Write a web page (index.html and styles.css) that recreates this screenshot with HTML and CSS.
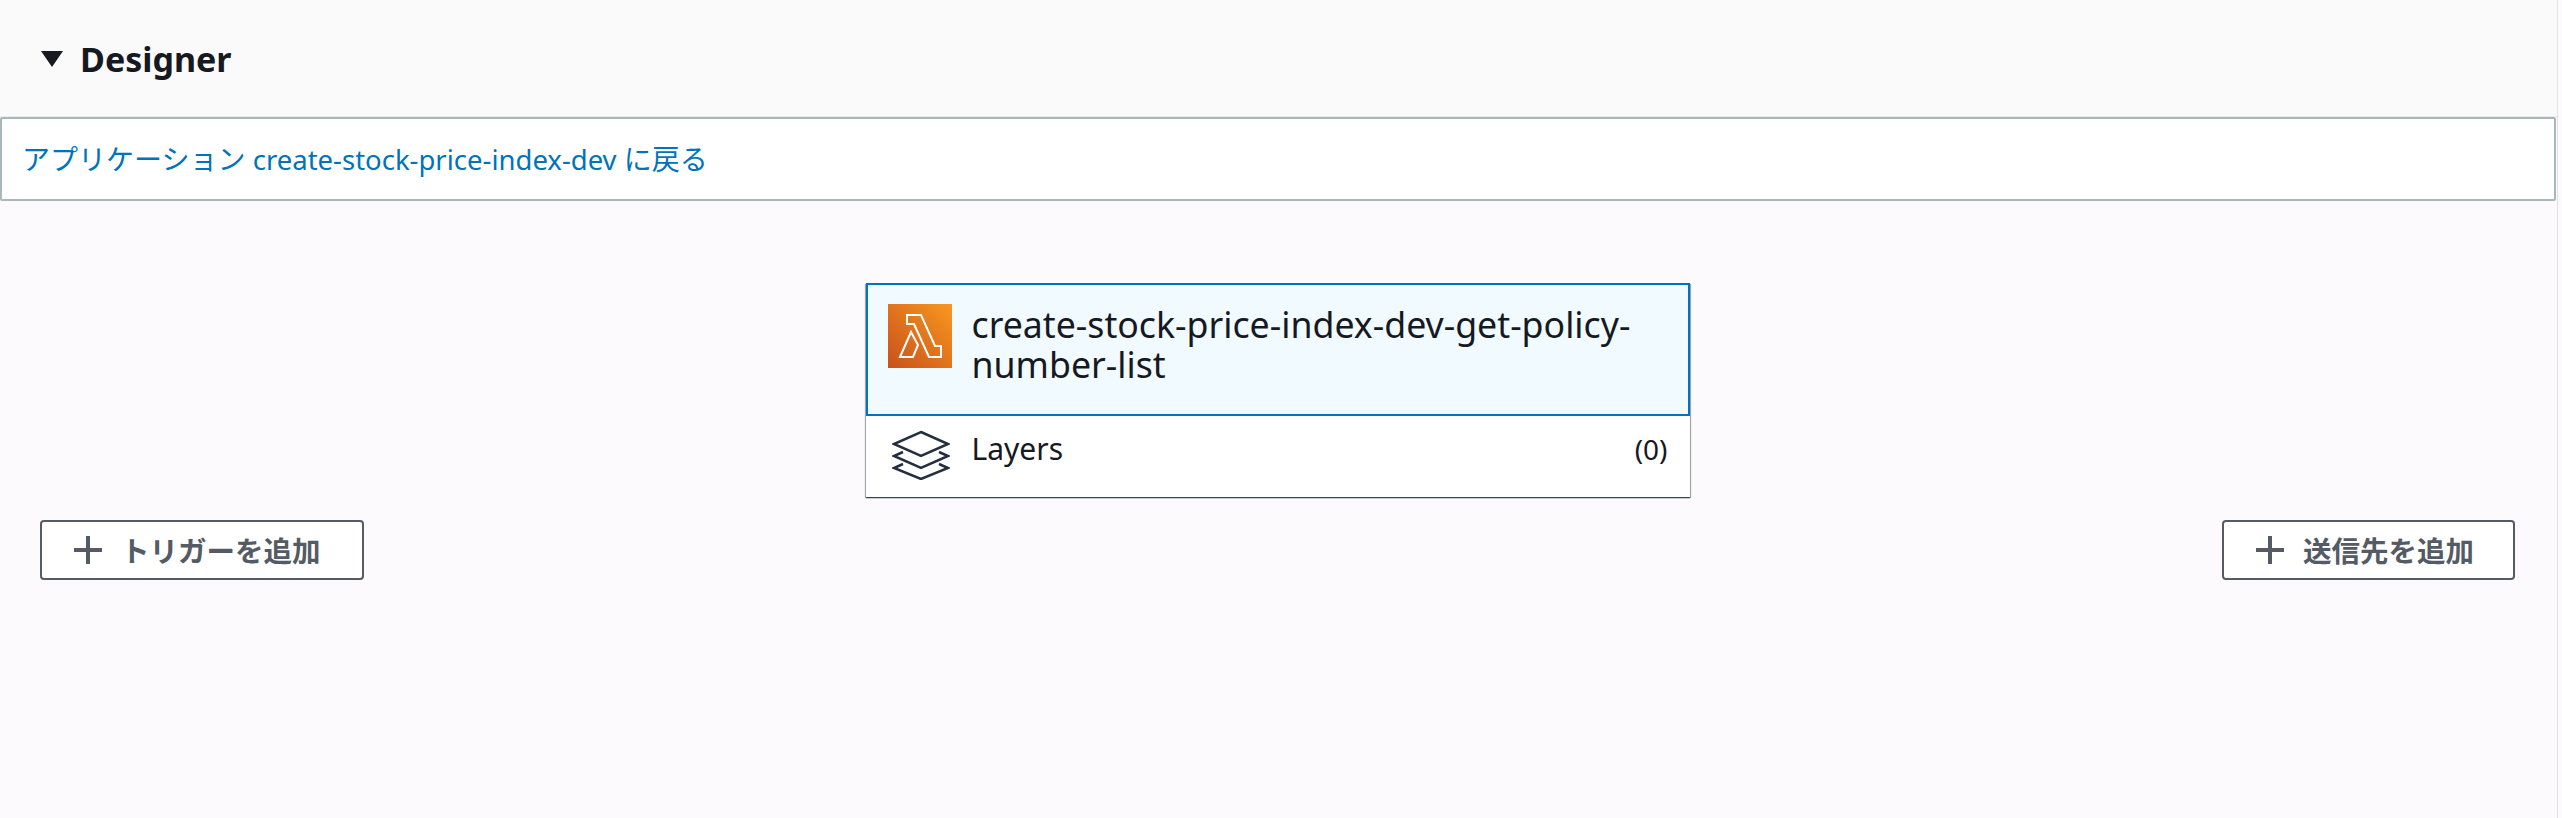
FILE: index.html
```html
<!DOCTYPE html>
<html lang="ja">
<head>
<meta charset="utf-8">
<title>Designer</title>
<link rel="stylesheet" href="styles.css">
</head>
<body>
<main class="page">
  <header class="head">
    <span class="caret"></span>
    <h2 class="title">Designer</h2>
  </header>
  <div class="notice">
    <a class="notice-link" href="#">アプリケーション <span class="notice-name">create-stock-price-index-dev</span> に戻る</a>
  </div>
  <section class="canvas">
    <button class="btn btn-left" type="button">
      <svg class="plus" viewBox="0 0 28 28" aria-hidden="true"><path d="M0 14H28M14 0V28"/></svg>
      <span>トリガーを追加</span>
    </button>
    <div class="card">
      <div class="fn">
        <svg class="fn-icon" viewBox="0 0 64 64" aria-hidden="true">
          <defs>
            <linearGradient id="lam" x1="0" y1="1" x2="1" y2="0">
              <stop offset="0" stop-color="#c8511b"/>
              <stop offset="1" stop-color="#f9971f"/>
            </linearGradient>
          </defs>
          <rect width="64" height="64" fill="url(#lam)"/>
          <path class="lam-line" d="M19 11H33L47 42H53V53H41L26 20H19Z"/>
          <path class="lam-line" d="M23 28L12 53H25L30 41Z"/>
        </svg>
        <span class="fn-name">create-stock-price-index-dev-get-policy-number-list</span>
      </div>
      <div class="layers">
        <svg class="layers-icon" viewBox="0 0 58 50" aria-hidden="true">
          <path class="lay-line" d="M29 2L56 14L29 26L2 14Z"/>
          <path class="lay-line" d="M11 22L2 26L29 38L56 26L47 22"/>
          <path class="lay-line" d="M11 34L2 38L29 49L56 38L47 34"/>
        </svg>
        <span class="layers-name">Layers</span>
        <span class="layers-count">(0)</span>
      </div>
    </div>
    <button class="btn btn-right" type="button">
      <svg class="plus" viewBox="0 0 28 28" aria-hidden="true"><path d="M0 14H28M14 0V28"/></svg>
      <span>送信先を追加</span>
    </button>
  </section>
</main>
</body>
</html>
```
FILE: styles.css
```css
* { box-sizing: border-box; }
html, body { margin: 0; height: 100%; }
body {
  background: #fcfafd;
  font-family: "Noto Sans", "Noto Sans CJK JP", sans-serif;
  overflow: hidden;
}
.page {
  width: 2558px;
  height: 818px;
  border-right: 1px solid #dfe3e3;
}
.head {
  height: 117px;
  background: #fafafa;
  display: flex;
  align-items: center;
  gap: 17px;
  padding: 2px 0 0 41px;
  border-bottom: 1px solid #eaeded;
}
.caret {
  width: 0;
  height: 0;
  border-left: 11px solid transparent;
  border-right: 11px solid transparent;
  border-top: 16px solid #16191f;
}
.title {
  margin: 0;
  font-size: 34px;
  line-height: 40px;
  font-weight: 700;
  color: #16191f;
}
.notice {
  width: 2556px;
  height: 84px;
  background: #fff;
  border: 2px solid #aab7b8;
  border-radius: 2px;
  padding: 0 20px;
  display: flex;
  align-items: center;
}
.notice-link {
  color: #0073bb;
  text-decoration: none;
  font-size: 28px;
  line-height: 40px;
}
.notice-name { font-size: 27.5px; }
.canvas {
  width: 2556px;
  padding: 82px 41px 0 40px;
  display: grid;
  grid-template-columns: 1fr 824px 1fr;
  align-items: end;
}
.btn {
  height: 60px;
  background: #fff;
  border: 2px solid #545b64;
  border-radius: 4px;
  color: #545b64;
  font: 700 28.5px/40px "Noto Sans CJK JP", sans-serif;
  display: inline-flex;
  align-items: center;
  gap: 19px;
  padding: 0;
}
.btn-left { width: 324px; justify-self: start; padding-left: 32px; }
.btn-right { width: 293px; justify-self: end; padding-left: 32px; }
.plus { width: 28px; height: 28px; flex: none; }
.plus path { stroke: #545b64; stroke-width: 4; fill: none; }
.card {
  margin-bottom: 83px;
  background: #fff;
  box-shadow: 0 1px 1px rgba(0, 28, 36, .6), 1px 1px 1px rgba(0, 28, 36, .3), -1px 1px 1px rgba(0, 28, 36, .3);
}
.fn {
  height: 133px;
  background: #f1faff;
  border: 2px solid #0073bb;
  padding: 19px 20px 0;
  display: flex;
  gap: 20px;
}
.fn-icon { width: 64px; height: 64px; flex: none; }
.lam-line { fill: none; stroke: #fff; stroke-width: 2; }
.fn-name {
  font-size: 35.7px;
  line-height: 40px;
  color: #16191f;
}
.layers {
  height: 81px;
  display: flex;
  align-items: flex-start;
  padding: 14px 22px 0 26px;
  color: #16191f;
}
.layers-icon { width: 58px; height: 50px; flex: none; }
.lay-line { fill: none; stroke: #232f3e; stroke-width: 2.5; }
.layers-name {
  margin: -1px 0 0 22px;
  font-size: 30px;
  line-height: 40px;
  flex: 1;
}
.layers-count { font-size: 28px; line-height: 40px; margin-top: -1px; }
```
